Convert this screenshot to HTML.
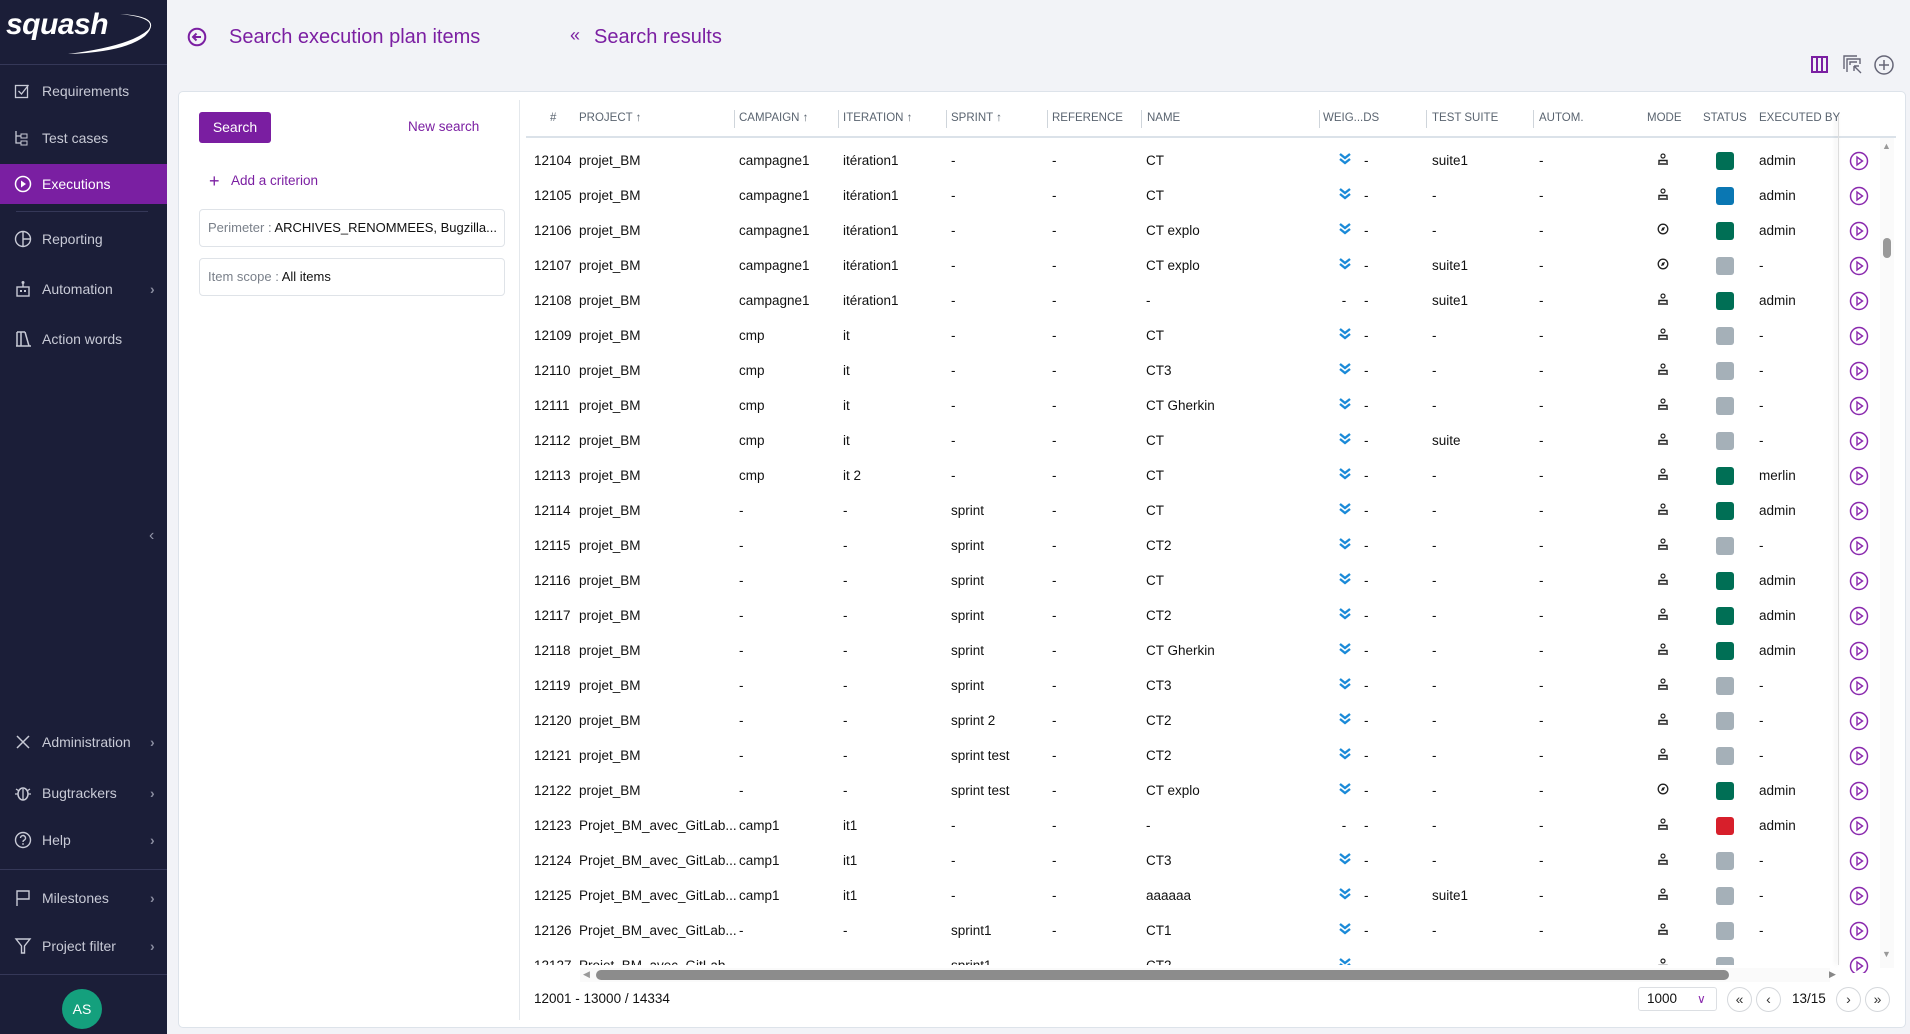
<!DOCTYPE html>
<html><head><meta charset="utf-8"><style>
*{box-sizing:border-box;margin:0;padding:0}
body{width:1910px;height:1034px;overflow:hidden;background:#f2f3f7;font-family:"Liberation Sans",sans-serif;position:relative;color:#111}
.sb{position:absolute;left:0;top:0;width:167px;height:1034px;background:#1b1e38;color:#c8cad6}
.nav{position:absolute;left:0;width:167px;height:40px;font-size:14px;display:flex;align-items:center}
.nav svg{position:absolute;left:14px}
.nav span{position:absolute;left:42px}
.nav .ch{position:absolute;left:150px;color:#8a8da0;font-size:14px}
.sep{position:absolute;height:1px;background:#353858}
.abs{position:absolute}
.card{position:absolute;left:178px;top:91px;width:1728px;height:937px;background:#fff;border:1px solid #dde3ea;border-radius:5px}
table{border-collapse:collapse;table-layout:fixed;font-size:13.5px}
td{height:35px;padding:0;white-space:nowrap;overflow:hidden;text-overflow:ellipsis;vertical-align:middle}
.hd{position:absolute;top:112px;font-size:11.5px;color:#5a6470;letter-spacing:0}
.hs{position:absolute;top:110px;width:1px;height:18px;background:#cfd5db}
.st{display:inline-block;width:18px;height:18px;border-radius:3px;vertical-align:middle}
.g{background:#006f55}.b{background:#0a77b3}.x{background:#a5b0b8}.r{background:#d71f2b}
.pb{position:absolute;width:25px;height:25px;border:1px solid #d5d8dc;border-radius:50%;top:987px;font-size:14px;color:#333;text-align:center;line-height:22px}
</style></head><body>
<svg width="0" height="0" style="position:absolute">
<symbol id="w" viewBox="0 0 14 14"><path d="M2 2l5 4 5-4M2 7l5 4 5-4" fill="none" stroke="#1a8ad8" stroke-width="2.4"/></symbol>
<symbol id="u" viewBox="0 0 12 12"><circle cx="6" cy="3" r="2" fill="none" stroke="#222" stroke-width="1.2"/><path d="M2 10v-2.5h8V10M1 11h10" fill="none" stroke="#222" stroke-width="1.4"/></symbol>
<symbol id="c" viewBox="0 0 12 12"><circle cx="6" cy="6" r="4.8" fill="none" stroke="#222" stroke-width="1.3"/><path d="M4 8l1.2-3.2L8 4 6.8 7.2z" fill="#222"/></symbol>
<symbol id="p" viewBox="0 0 20 20"><circle cx="10" cy="10" r="8.5" fill="none" stroke="#8a2aae" stroke-width="1.5"/><path d="M8 6v8l5.5-4z" fill="none" stroke="#8a2aae" stroke-width="1.4"/></symbol>
</svg>

<div class="sb">
 <div class="abs" style="left:6px;top:8px;font:italic bold 30px 'Liberation Sans',sans-serif;color:#fff;letter-spacing:-0.5px">squash</div>
 <svg class="abs" style="left:60px;top:10px" width="100" height="46"><path d="M60 4 Q105 6 85 26 Q65 42 8 44 Q70 36 88 20 Q98 8 60 4z" fill="#fff"/></svg>
 <div class="sep" style="left:0;top:64px;width:167px"></div>
 <div class="nav" style="top:71px"><svg width="16" height="16" viewBox="0 0 16 16"><rect x="1.5" y="2.5" width="12" height="12" fill="none" stroke="#c8cad6" stroke-width="1.3"/><path d="M4.5 8l3 3 7-9" fill="none" stroke="#c8cad6" stroke-width="1.3"/></svg><span>Requirements</span></div>
 <div class="nav" style="top:118px"><svg width="16" height="16" viewBox="0 0 16 16"><path d="M2 1v12h5M2 6h5" fill="none" stroke="#c8cad6" stroke-width="1.3"/><rect x="7" y="4" width="6" height="4" fill="none" stroke="#c8cad6"/><rect x="7" y="11" width="6" height="4" fill="none" stroke="#c8cad6"/></svg><span>Test cases</span></div>
 <div class="nav" style="top:164px;background:#7a1fa2;color:#fff;height:40px"><svg width="18" height="18" viewBox="0 0 18 18"><circle cx="9" cy="9" r="7.5" fill="none" stroke="#fff" stroke-width="1.5"/><path d="M7 5.5v7l5-3.5z" fill="#fff"/></svg><span>Executions</span></div>
 <div class="sep" style="left:16px;top:211px;width:132px"></div>
 <div class="nav" style="top:219px"><svg width="18" height="18" viewBox="0 0 18 18"><circle cx="9" cy="9" r="7.5" fill="none" stroke="#c8cad6" stroke-width="1.4"/><path d="M9 1.5v15M9 9h7.5" stroke="#c8cad6" stroke-width="1.4"/></svg><span>Reporting</span></div>
 <div class="nav" style="top:269px"><svg width="18" height="18" viewBox="0 0 18 18"><rect x="3" y="7" width="12" height="9" fill="none" stroke="#c8cad6" stroke-width="1.4"/><path d="M9 7V3" stroke="#c8cad6" stroke-width="1.4"/><circle cx="9" cy="2.5" r="1.5" fill="#c8cad6"/><rect x="6" y="10" width="2" height="2" fill="#c8cad6"/><rect x="10" y="10" width="2" height="2" fill="#c8cad6"/></svg><span>Automation</span><b class="ch">›</b></div>
 <div class="nav" style="top:319px"><svg width="18" height="18" viewBox="0 0 18 18"><path d="M2 16h15M3 2v14M7 2v14M11 2l4 14M3 2h8" fill="none" stroke="#c8cad6" stroke-width="1.5"/></svg><span>Action words</span></div>
 <div class="abs" style="left:149px;top:527px;color:#9093a6;font-size:16px">‹</div>
 <div class="nav" style="top:722px"><svg width="18" height="18" viewBox="0 0 18 18"><path d="M3 3l12 12M15 3L3 15" stroke="#c8cad6" stroke-width="1.5"/></svg><span>Administration</span><b class="ch">›</b></div>
 <div class="nav" style="top:773px"><svg width="18" height="18" viewBox="0 0 18 18"><ellipse cx="9" cy="10" rx="5" ry="6" fill="none" stroke="#c8cad6" stroke-width="1.5"/><path d="M9 5v11M1 10h3M14 10h3M2 5l3 2M16 5l-3 2" stroke="#c8cad6" stroke-width="1.3"/></svg><span>Bugtrackers</span><b class="ch">›</b></div>
 <div class="nav" style="top:820px"><svg width="18" height="18" viewBox="0 0 18 18"><circle cx="9" cy="9" r="7.5" fill="none" stroke="#c8cad6" stroke-width="1.4"/><path d="M6.5 7a2.5 2.5 0 1 1 3.5 2.3c-.8.4-1 1-1 1.7" fill="none" stroke="#c8cad6" stroke-width="1.4"/><circle cx="9" cy="13" r=".9" fill="#c8cad6"/></svg><span>Help</span><b class="ch">›</b></div>
 <div class="sep" style="left:0;top:869px;width:167px"></div>
 <div class="nav" style="top:878px"><svg width="18" height="18" viewBox="0 0 18 18"><path d="M3 17V2h12v8H3" fill="none" stroke="#c8cad6" stroke-width="1.4"/></svg><span>Milestones</span><b class="ch">›</b></div>
 <div class="nav" style="top:926px"><svg width="18" height="18" viewBox="0 0 18 18"><path d="M2 2h14l-5.5 7v7h-3V9z" fill="none" stroke="#c8cad6" stroke-width="1.4"/></svg><span>Project filter</span><b class="ch">›</b></div>
 <div class="sep" style="left:0;top:974px;width:167px"></div>
 <div class="abs" style="left:62px;top:989px;width:40px;height:40px;border-radius:50%;background:#14a07d;color:#fff;font-size:14px;text-align:center;line-height:40px">AS</div>
</div>

<svg class="abs" style="left:187px;top:27px" width="20" height="20" viewBox="0 0 20 20"><circle cx="10" cy="10" r="8.3" fill="none" stroke="#7b1fa2" stroke-width="2"/><path d="M14 10H6.5M9.5 6.5 6 10l3.5 3.5" fill="none" stroke="#7b1fa2" stroke-width="2"/></svg>
<div class="abs" style="left:229px;top:26px;font-size:20px;color:#7b1fa2">Search execution plan items</div>
<div class="abs" style="left:570px;top:25px;font-size:18px;color:#7b1fa2">«</div>
<div class="abs" style="left:594px;top:26px;font-size:20px;color:#7b1fa2">Search results</div>
<svg class="abs" style="left:1810px;top:55px" width="20" height="20"><rect x="2" y="2" width="15" height="15" fill="none" stroke="#7b1fa2" stroke-width="2"/><path d="M7 2v15M12 2v15" stroke="#7b1fa2" stroke-width="2"/></svg>
<svg class="abs" style="left:1842px;top:54px" width="22" height="22"><path d="M2 15V2h13M5 18V5h13v5M8 11v-3h7" fill="none" stroke="#667" stroke-width="1.4"/><path d="M12 12l7 7M12 12v5M12 12h5" stroke="#667" stroke-width="1.4" fill="none"/></svg>
<svg class="abs" style="left:1873px;top:54px" width="22" height="22"><circle cx="11" cy="11" r="9" fill="none" stroke="#667" stroke-width="1.5"/><path d="M11 6v10M6 11h10" stroke="#667" stroke-width="1.5"/></svg>

<div class="card"></div>
<div class="abs" style="left:199px;top:112px;width:72px;height:31px;background:#7a1ea1;border-radius:3px;color:#fff;font-size:14px;text-align:center;line-height:31px">Search</div>
<div class="abs" style="left:408px;top:119px;color:#7b1fa2;font-size:13.5px">New search</div>
<div class="abs" style="left:209px;top:171px;color:#7b1fa2;font-size:18px">+</div>
<div class="abs" style="left:231px;top:173px;color:#7b1fa2;font-size:13.5px">Add a criterion</div>
<div class="abs" style="left:199px;top:209px;width:306px;height:38px;border:1px solid #dfe3e8;border-radius:4px;font-size:13px;line-height:36px;padding-left:8px;white-space:nowrap;overflow:hidden"><span style="color:#7a808a">Perimeter : </span>ARCHIVES_RENOMMEES, Bugzilla...</div>
<div class="abs" style="left:199px;top:258px;width:306px;height:38px;border:1px solid #dfe3e8;border-radius:4px;font-size:13px;line-height:36px;padding-left:8px"><span style="color:#7a808a">Item scope : </span>All items</div>
<div class="abs" style="left:519px;top:100px;width:1px;height:920px;background:#e4e8ec"></div>

<div class="hd" style="left:550px">#</div>
<div class="hd" style="left:579px">PROJECT ↑</div>
<div class="hs" style="left:734px"></div><div class="hd" style="left:739px">CAMPAIGN ↑</div>
<div class="hs" style="left:838px"></div><div class="hd" style="left:843px">ITERATION ↑</div>
<div class="hs" style="left:946px"></div><div class="hd" style="left:951px">SPRINT ↑</div>
<div class="hs" style="left:1047px"></div><div class="hd" style="left:1052px">REFERENCE</div>
<div class="hs" style="left:1141px"></div><div class="hd" style="left:1147px">NAME</div>
<div class="hs" style="left:1319px"></div><div class="hd" style="left:1323px">WEIG...DS</div>
<div class="hs" style="left:1426px"></div><div class="hd" style="left:1432px">TEST SUITE</div>
<div class="hs" style="left:1533px"></div><div class="hd" style="left:1539px">AUTOM.</div>
<div class="hd" style="left:1647px">MODE</div>
<div class="hd" style="left:1703px">STATUS</div>
<div class="hd" style="left:1759px">EXECUTED BY</div>
<div class="abs" style="left:526px;top:136px;width:1370px;height:2px;background:#dbe2e9"></div>

<div class="abs" style="left:530px;top:139px;width:1310px;height:826px;overflow:hidden">
<table style="position:absolute;left:4px;top:4px;width:1305px">
<colgroup><col style="width:45px"><col style="width:160px"><col style="width:104px"><col style="width:108px"><col style="width:101px"><col style="width:94px"><col style="width:192px"><col style="width:26px"><col style="width:68px"><col style="width:107px"><col style="width:118px"><col style="width:59px"><col style="width:43px"><col style="width:80px"></colgroup>
<tr><td>12104</td><td>projet_BM</td><td>campagne1</td><td>itération1</td><td>-</td><td>-</td><td>CT</td><td><svg width="14" height="14"><use href="#w"/></svg></td><td>-</td><td>suite1</td><td>-</td><td><svg width="12" height="12"><use href="#u"/></svg></td><td><i class="st g"></i></td><td>admin</td></tr>
<tr><td>12105</td><td>projet_BM</td><td>campagne1</td><td>itération1</td><td>-</td><td>-</td><td>CT</td><td><svg width="14" height="14"><use href="#w"/></svg></td><td>-</td><td>-</td><td>-</td><td><svg width="12" height="12"><use href="#u"/></svg></td><td><i class="st b"></i></td><td>admin</td></tr>
<tr><td>12106</td><td>projet_BM</td><td>campagne1</td><td>itération1</td><td>-</td><td>-</td><td>CT explo</td><td><svg width="14" height="14"><use href="#w"/></svg></td><td>-</td><td>-</td><td>-</td><td><svg width="12" height="12"><use href="#c"/></svg></td><td><i class="st g"></i></td><td>admin</td></tr>
<tr><td>12107</td><td>projet_BM</td><td>campagne1</td><td>itération1</td><td>-</td><td>-</td><td>CT explo</td><td><svg width="14" height="14"><use href="#w"/></svg></td><td>-</td><td>suite1</td><td>-</td><td><svg width="12" height="12"><use href="#c"/></svg></td><td><i class="st x"></i></td><td>-</td></tr>
<tr><td>12108</td><td>projet_BM</td><td>campagne1</td><td>itération1</td><td>-</td><td>-</td><td>-</td><td>&nbsp;-</td><td>-</td><td>suite1</td><td>-</td><td><svg width="12" height="12"><use href="#u"/></svg></td><td><i class="st g"></i></td><td>admin</td></tr>
<tr><td>12109</td><td>projet_BM</td><td>cmp</td><td>it</td><td>-</td><td>-</td><td>CT</td><td><svg width="14" height="14"><use href="#w"/></svg></td><td>-</td><td>-</td><td>-</td><td><svg width="12" height="12"><use href="#u"/></svg></td><td><i class="st x"></i></td><td>-</td></tr>
<tr><td>12110</td><td>projet_BM</td><td>cmp</td><td>it</td><td>-</td><td>-</td><td>CT3</td><td><svg width="14" height="14"><use href="#w"/></svg></td><td>-</td><td>-</td><td>-</td><td><svg width="12" height="12"><use href="#u"/></svg></td><td><i class="st x"></i></td><td>-</td></tr>
<tr><td>12111</td><td>projet_BM</td><td>cmp</td><td>it</td><td>-</td><td>-</td><td>CT Gherkin</td><td><svg width="14" height="14"><use href="#w"/></svg></td><td>-</td><td>-</td><td>-</td><td><svg width="12" height="12"><use href="#u"/></svg></td><td><i class="st x"></i></td><td>-</td></tr>
<tr><td>12112</td><td>projet_BM</td><td>cmp</td><td>it</td><td>-</td><td>-</td><td>CT</td><td><svg width="14" height="14"><use href="#w"/></svg></td><td>-</td><td>suite</td><td>-</td><td><svg width="12" height="12"><use href="#u"/></svg></td><td><i class="st x"></i></td><td>-</td></tr>
<tr><td>12113</td><td>projet_BM</td><td>cmp</td><td>it 2</td><td>-</td><td>-</td><td>CT</td><td><svg width="14" height="14"><use href="#w"/></svg></td><td>-</td><td>-</td><td>-</td><td><svg width="12" height="12"><use href="#u"/></svg></td><td><i class="st g"></i></td><td>merlin</td></tr>
<tr><td>12114</td><td>projet_BM</td><td>-</td><td>-</td><td>sprint</td><td>-</td><td>CT</td><td><svg width="14" height="14"><use href="#w"/></svg></td><td>-</td><td>-</td><td>-</td><td><svg width="12" height="12"><use href="#u"/></svg></td><td><i class="st g"></i></td><td>admin</td></tr>
<tr><td>12115</td><td>projet_BM</td><td>-</td><td>-</td><td>sprint</td><td>-</td><td>CT2</td><td><svg width="14" height="14"><use href="#w"/></svg></td><td>-</td><td>-</td><td>-</td><td><svg width="12" height="12"><use href="#u"/></svg></td><td><i class="st x"></i></td><td>-</td></tr>
<tr><td>12116</td><td>projet_BM</td><td>-</td><td>-</td><td>sprint</td><td>-</td><td>CT</td><td><svg width="14" height="14"><use href="#w"/></svg></td><td>-</td><td>-</td><td>-</td><td><svg width="12" height="12"><use href="#u"/></svg></td><td><i class="st g"></i></td><td>admin</td></tr>
<tr><td>12117</td><td>projet_BM</td><td>-</td><td>-</td><td>sprint</td><td>-</td><td>CT2</td><td><svg width="14" height="14"><use href="#w"/></svg></td><td>-</td><td>-</td><td>-</td><td><svg width="12" height="12"><use href="#u"/></svg></td><td><i class="st g"></i></td><td>admin</td></tr>
<tr><td>12118</td><td>projet_BM</td><td>-</td><td>-</td><td>sprint</td><td>-</td><td>CT Gherkin</td><td><svg width="14" height="14"><use href="#w"/></svg></td><td>-</td><td>-</td><td>-</td><td><svg width="12" height="12"><use href="#u"/></svg></td><td><i class="st g"></i></td><td>admin</td></tr>
<tr><td>12119</td><td>projet_BM</td><td>-</td><td>-</td><td>sprint</td><td>-</td><td>CT3</td><td><svg width="14" height="14"><use href="#w"/></svg></td><td>-</td><td>-</td><td>-</td><td><svg width="12" height="12"><use href="#u"/></svg></td><td><i class="st x"></i></td><td>-</td></tr>
<tr><td>12120</td><td>projet_BM</td><td>-</td><td>-</td><td>sprint 2</td><td>-</td><td>CT2</td><td><svg width="14" height="14"><use href="#w"/></svg></td><td>-</td><td>-</td><td>-</td><td><svg width="12" height="12"><use href="#u"/></svg></td><td><i class="st x"></i></td><td>-</td></tr>
<tr><td>12121</td><td>projet_BM</td><td>-</td><td>-</td><td>sprint test</td><td>-</td><td>CT2</td><td><svg width="14" height="14"><use href="#w"/></svg></td><td>-</td><td>-</td><td>-</td><td><svg width="12" height="12"><use href="#u"/></svg></td><td><i class="st x"></i></td><td>-</td></tr>
<tr><td>12122</td><td>projet_BM</td><td>-</td><td>-</td><td>sprint test</td><td>-</td><td>CT explo</td><td><svg width="14" height="14"><use href="#w"/></svg></td><td>-</td><td>-</td><td>-</td><td><svg width="12" height="12"><use href="#c"/></svg></td><td><i class="st g"></i></td><td>admin</td></tr>
<tr><td>12123</td><td>Projet_BM_avec_GitLab...</td><td>camp1</td><td>it1</td><td>-</td><td>-</td><td>-</td><td>&nbsp;-</td><td>-</td><td>-</td><td>-</td><td><svg width="12" height="12"><use href="#u"/></svg></td><td><i class="st r"></i></td><td>admin</td></tr>
<tr><td>12124</td><td>Projet_BM_avec_GitLab...</td><td>camp1</td><td>it1</td><td>-</td><td>-</td><td>CT3</td><td><svg width="14" height="14"><use href="#w"/></svg></td><td>-</td><td>-</td><td>-</td><td><svg width="12" height="12"><use href="#u"/></svg></td><td><i class="st x"></i></td><td>-</td></tr>
<tr><td>12125</td><td>Projet_BM_avec_GitLab...</td><td>camp1</td><td>it1</td><td>-</td><td>-</td><td>aaaaaa</td><td><svg width="14" height="14"><use href="#w"/></svg></td><td>-</td><td>suite1</td><td>-</td><td><svg width="12" height="12"><use href="#u"/></svg></td><td><i class="st x"></i></td><td>-</td></tr>
<tr><td>12126</td><td>Projet_BM_avec_GitLab...</td><td>-</td><td>-</td><td>sprint1</td><td>-</td><td>CT1</td><td><svg width="14" height="14"><use href="#w"/></svg></td><td>-</td><td>-</td><td>-</td><td><svg width="12" height="12"><use href="#u"/></svg></td><td><i class="st x"></i></td><td>-</td></tr>
<tr><td>12127</td><td>Projet_BM_avec_GitLab...</td><td>-</td><td>-</td><td>sprint1</td><td>-</td><td>CT2</td><td><svg width="14" height="14"><use href="#w"/></svg></td><td>-</td><td>-</td><td>-</td><td><svg width="12" height="12"><use href="#u"/></svg></td><td><i class="st x"></i></td><td>-</td></tr>
</table>
</div>

<div class="abs" style="left:1838px;top:115px;width:1px;height:850px;background:#ddd;box-shadow:-2px 0 4px rgba(0,0,0,.15)"></div>
<div class="abs" style="left:1849px;top:143px;width:24px;height:830px;overflow:hidden">
<svg width="22" height="830" viewBox="0 0 22 830">
<g><use href="#p" x="0" y="8" width="20" height="20"/><use href="#p" x="0" y="43" width="20" height="20"/><use href="#p" x="0" y="78" width="20" height="20"/><use href="#p" x="0" y="113" width="20" height="20"/><use href="#p" x="0" y="148" width="20" height="20"/><use href="#p" x="0" y="183" width="20" height="20"/><use href="#p" x="0" y="218" width="20" height="20"/><use href="#p" x="0" y="253" width="20" height="20"/><use href="#p" x="0" y="288" width="20" height="20"/><use href="#p" x="0" y="323" width="20" height="20"/><use href="#p" x="0" y="358" width="20" height="20"/><use href="#p" x="0" y="393" width="20" height="20"/><use href="#p" x="0" y="428" width="20" height="20"/><use href="#p" x="0" y="463" width="20" height="20"/><use href="#p" x="0" y="498" width="20" height="20"/><use href="#p" x="0" y="533" width="20" height="20"/><use href="#p" x="0" y="568" width="20" height="20"/><use href="#p" x="0" y="603" width="20" height="20"/><use href="#p" x="0" y="638" width="20" height="20"/><use href="#p" x="0" y="673" width="20" height="20"/><use href="#p" x="0" y="708" width="20" height="20"/><use href="#p" x="0" y="743" width="20" height="20"/><use href="#p" x="0" y="778" width="20" height="20"/><use href="#p" x="0" y="813" width="20" height="20"/></g></svg>
</div>
<div class="abs" style="left:1880px;top:138px;width:14px;height:830px;background:#fafafa"></div>
<div class="abs" style="left:1882px;top:141px;font-size:9px;color:#999">▲</div>
<div class="abs" style="left:1883px;top:238px;width:8px;height:20px;border-radius:4px;background:#999"></div>
<div class="abs" style="left:1882px;top:949px;font-size:9px;color:#999">▼</div>

<div class="abs" style="left:580px;top:968px;width:1250px;height:14px;background:#fafafa"></div>
<div class="abs" style="left:583px;top:969px;font-size:9px;color:#999">◀</div>
<div class="abs" style="left:596px;top:970px;width:1133px;height:10px;border-radius:5px;background:#8c8c8c"></div>
<div class="abs" style="left:1829px;top:969px;font-size:9px;color:#888">▶</div>

<div class="abs" style="left:534px;top:991px;font-size:13.5px">12001 - 13000 / 14334</div>
<div class="abs" style="left:1638px;top:987px;width:79px;height:24px;border:1px solid #dcdfe3;border-radius:3px;font-size:13.5px;line-height:22px;padding-left:8px">1000<span style="position:absolute;left:58px;top:0;color:#8a2aae;font-size:12px">∨</span></div>
<div class="pb" style="left:1727px">«</div>
<div class="pb" style="left:1756px">‹</div>
<div class="abs" style="left:1792px;top:991px;font-size:13.5px">13/15</div>
<div class="pb" style="left:1836px">›</div>
<div class="pb" style="left:1865px">»</div>
</body></html>
